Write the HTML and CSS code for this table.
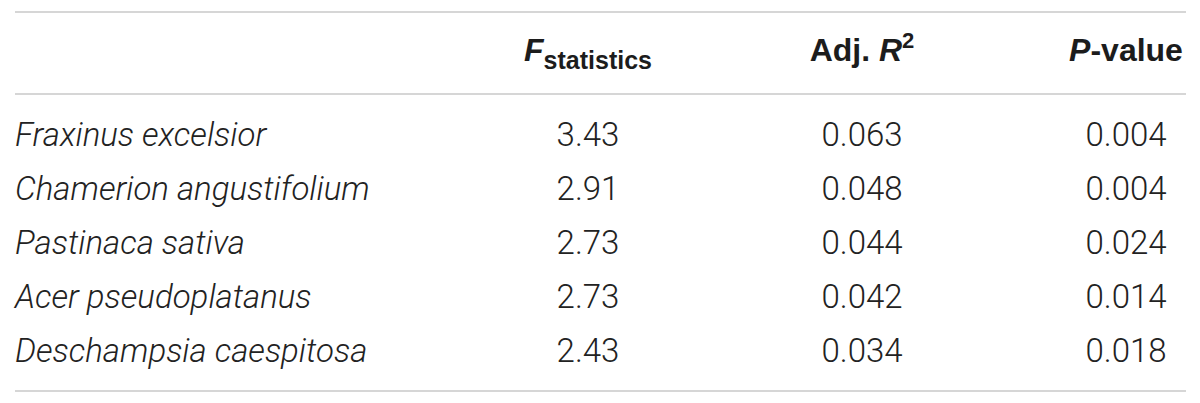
FILE: index.html
```html
<!DOCTYPE html>
<html lang="en">
<head>
<meta charset="utf-8">
<title>Species statistics</title>
<link rel="stylesheet" href="styles.css">
</head>
<body>
<div class="table">
  <div class="row head">
    <div class="cell name"></div>
    <div class="cell num"><i>F</i><sub>statistics</sub></div>
    <div class="cell num">Adj. <i>R</i><sup>2</sup></div>
    <div class="cell num"><i>P</i>-value</div>
  </div>
  <div class="body">
    <div class="row">
      <div class="cell name">Fraxinus excelsior</div>
      <div class="cell num">3.43</div>
      <div class="cell num">0.063</div>
      <div class="cell num">0.004</div>
    </div>
    <div class="row">
      <div class="cell name">Chamerion angustifolium</div>
      <div class="cell num">2.91</div>
      <div class="cell num">0.048</div>
      <div class="cell num">0.004</div>
    </div>
    <div class="row">
      <div class="cell name">Pastinaca sativa</div>
      <div class="cell num">2.73</div>
      <div class="cell num">0.044</div>
      <div class="cell num">0.024</div>
    </div>
    <div class="row">
      <div class="cell name">Acer pseudoplatanus</div>
      <div class="cell num">2.73</div>
      <div class="cell num">0.042</div>
      <div class="cell num">0.014</div>
    </div>
    <div class="row">
      <div class="cell name">Deschampsia caespitosa</div>
      <div class="cell num">2.43</div>
      <div class="cell num">0.034</div>
      <div class="cell num">0.018</div>
    </div>
  </div>
</div>
</body>
</html>
```

FILE: styles.css
```css
html, body {
  margin: 0;
  padding: 0;
  background: #ffffff;
}

body {
  padding: 11px 14px 0 15px;
  font-family: "Roboto", "Liberation Sans", sans-serif;
  color: #222222;
}

.table {
  border-top: 2px solid #d6d6d6;
  border-bottom: 2px solid #d6d6d6;
}

.row {
  display: grid;
  grid-template-columns: 1fr 140px 408px 120px;
  align-items: center;
  height: 54px;
}

.head {
  height: 80px;
  border-bottom: 2px solid #d6d6d6;
  font-family: "Liberation Sans", Arial, sans-serif;
  font-weight: 700;
  font-size: 32px;
  color: #1c1c1c;
}

.head .cell {
  padding-bottom: 6px;
}

.body {
  padding: 12px 0 13px;
}

.body .row {
  font-size: 33px;
  font-weight: 300;
}

.cell.name {
  font-style: italic;
  white-space: nowrap;
}

.cell.num {
  text-align: center;
  white-space: nowrap;
}

.head sub {
  font-size: 25px;
  vertical-align: -8px;
  line-height: 0;
}

.head sup {
  font-size: 22px;
  vertical-align: 13px;
  line-height: 0;
}
```
